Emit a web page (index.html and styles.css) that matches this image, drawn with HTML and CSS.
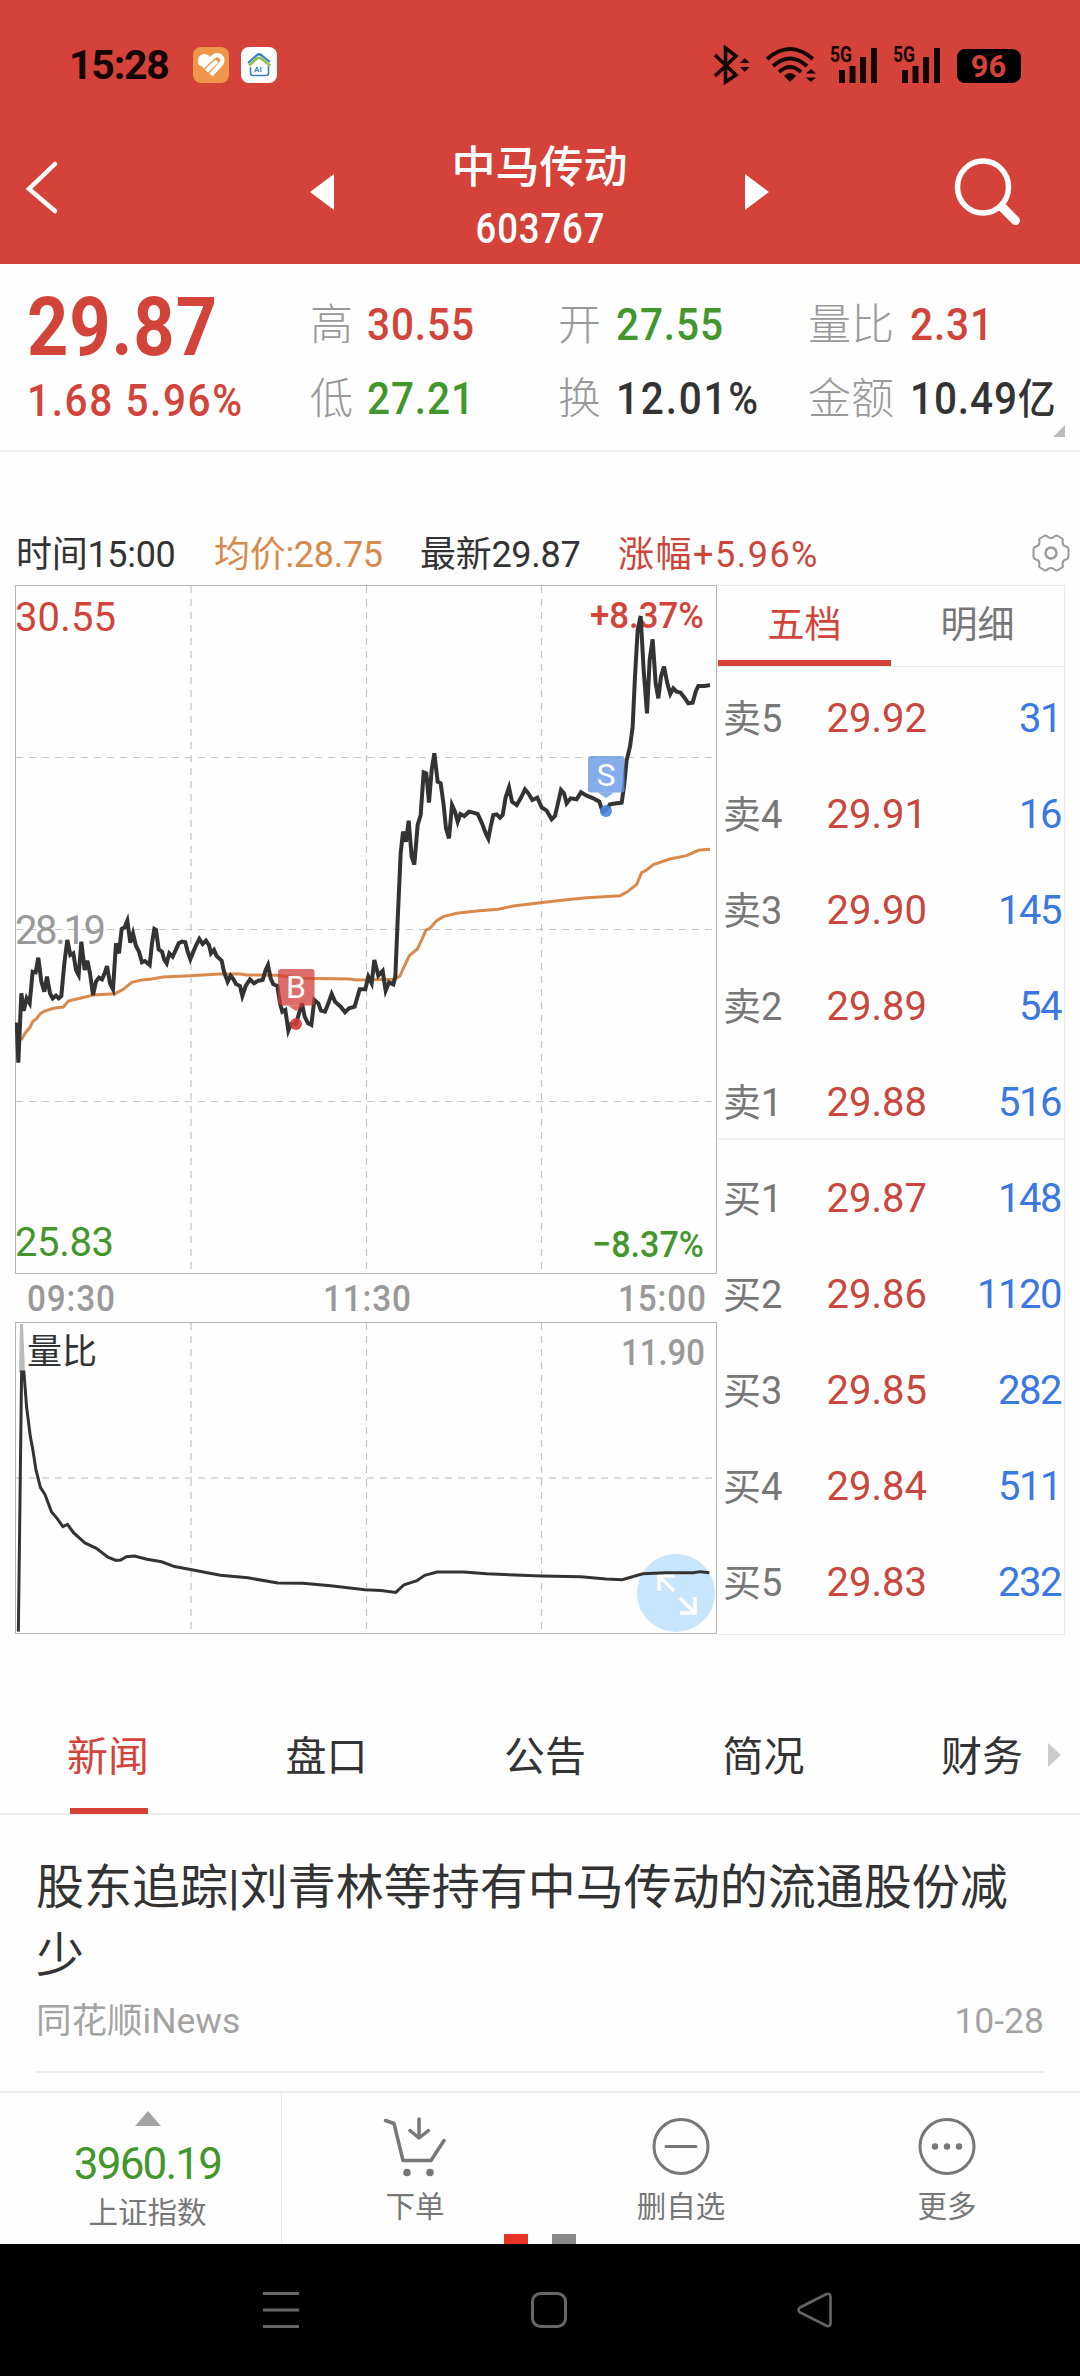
FILE: index.html
```html
<!DOCTYPE html>
<html lang="zh-CN">

<head>
    <meta charset="UTF-8">
    <meta name="viewport" content="width=device-width, initial-scale=1.0">
    <title>中马传动 603767</title>
    <link rel="stylesheet" href="styles.css">
</head>

<body>
    <header class="top">
        <div class="status">
            <span class="clock">15:28</span>
            <svg class="app-icon" width="36" height="36" viewBox="0 0 36 36">
                <rect width="36" height="36" rx="8" fill="#f0964a"/>
                <path d="M9.500 20L20 10C26 5 33 12 27 18L18 28M13.500 24L24 14" fill="none" stroke="#fff" stroke-width="4.400"/>
                <path d="M6 18C3 12 7 7 11 7Q15 7 17 10L8 19Z" fill="#fff"/>
            </svg>
            <svg class="app-icon" width="36" height="36" viewBox="0 0 36 36">
                <rect width="36" height="36" rx="8" fill="#fff"/>
                <path d="M7 16L16 8Q18 6.500 20 8L29 15" fill="none" stroke="#3d7fc4" stroke-width="2.200"/>
                <path d="M8 18.500L16 11.500Q18 10 20 11.500L29 18.500" fill="none" stroke="#8fbf4f" stroke-width="2.600"/>
                <path d="M9.500 20V26Q9.500 28.500 12 28.500H25Q27.500 28.500 27.500 26V19" fill="none" stroke="#3d7fc4" stroke-width="1.600"/>
                <text x="13" y="25" class="ai">AI</text>
            </svg>
            <span class="spacer"></span>
            <svg width="38" height="40" viewBox="711 45 38 40">
                <path d="M713 55L734 75L723.500 82V48L734 56L713 76" fill="none" stroke="#150404" stroke-width="3.600"/>
                <path d="M738 63L742.800 58L747.600 63ZM738 67L742.800 72L747.600 67Z" fill="#150404"/>
            </svg>
            <svg class="wifi" width="52" height="40" viewBox="763 45 52 40">
                <path d="M765 59Q788 39 811 59M771 66Q788 51 805 66M777 72Q788 62 799 72" fill="none" stroke="#150404" stroke-width="3.800"/>
                <path d="M782 76Q788 70 794 76L788 82Z" fill="#150404"/>
                <path d="M804 73.500L809 69L814 73.500ZM804 77.500L809 82L814 77.500Z" fill="#150404"/>
            </svg>
            <svg class="signal" width="50" height="46" viewBox="827 39 50 46">
                <text x="829" y="62" textLength="22" lengthAdjust="spacingAndGlyphs">5G</text>
                <path d="M841 70V83M851.500 66V83M862 57V83M873 48V83"/>
            </svg>
            <svg class="signal" width="50" height="46" viewBox="827 39 50 46">
                <text x="829" y="62" textLength="22" lengthAdjust="spacingAndGlyphs">5G</text>
                <path d="M841 70V83M851.500 66V83M862 57V83M873 48V83"/>
            </svg>
            <span class="battery">96</span>
        </div>
        <div class="title-bar">
            <svg class="back" width="36" height="56" viewBox="24 160 36 56">
                <path d="M55 164L29 189L55 211" fill="none" stroke="#fff" stroke-width="4.500" stroke-linecap="round"/>
            </svg>
            <svg class="prev" width="24" height="36" viewBox="0 0 24 36"><path d="M0 18L24 0V36Z" fill="#fff"/></svg>
            <div class="stock">
                <h1>中马传动</h1>
                <span class="code num">603767</span>
            </div>
            <svg class="next" width="24" height="36" viewBox="0 0 24 36"><path d="M24 18L0 0V36Z" fill="#fff"/></svg>
            <svg class="search" width="70" height="74" viewBox="950 155 70 74">
                <ellipse cx="982" cy="187" rx="25.500" ry="26" fill="none" stroke="#fff" stroke-width="5.500"/>
                <path d="M1001 207L1014.500 220.500" stroke="#fff" stroke-width="9" stroke-linecap="round"/>
            </svg>
        </div>
    </header>

    <section class="quote">
        <div class="price">
            <span class="last num">29.87</span>
            <span class="change num">1.68 5.96%</span>
        </div>
        <dl class="c1">
            <dt>高</dt><dd class="num red">30.55</dd>
            <dt>低</dt><dd class="num green">27.21</dd>
        </dl>
        <dl class="c2">
            <dt>开</dt><dd class="num green">27.55</dd>
            <dt>换</dt><dd class="num wide">12.01%</dd>
        </dl>
        <dl class="c3">
            <dt>量比</dt><dd class="num red">2.31</dd>
            <dt>金额</dt><dd class="num">10.49<small>亿</small></dd>
        </dl>
        <i class="corner"></i>
    </section>

    <section class="info">
        <span>时间15:00</span>
        <span class="avg">均价:28.75</span>
        <span>最新29.87</span>
        <span class="rise">涨幅+5.96%</span>
        <svg width="38" height="38" viewBox="-19 -19 38 38" fill="none" stroke="#999" stroke-width="2">
            <path d="M-6 -17.500Q-4 -17.500 -3 -16Q0 -14 3 -16Q4 -17.500 6 -17.500L11 -14.500Q12.500 -13.500 11.500 -11.500Q11.500 -7 15 -6.500Q17.500 -6 17.500 -3V3Q17.500 6 15 6.500Q11.500 7 11.500 11.500Q12.500 13.500 11 14.500L6 17.500Q4 17.500 3 16Q0 14 -3 16Q-4 17.500 -6 17.500L-11 14.500Q-12.500 13.500 -11.500 11.500Q-11.500 7 -15 6.500Q-17.500 6 -17.500 3V-3Q-17.500 -6 -15 -6.500Q-11.500 -7 -11.500 -11.500Q-12.500 -13.500 -11 -14.500Z"/>
            <circle r="5.500" stroke-width="2.500"/>
        </svg>
    </section>

    <main class="market">
        <div class="charts">
            <!-- intraday price -->
            <svg class="chart" width="703" height="690" viewBox="15 585 703 690">
                <g class="grid">
                    <path d="M16 757.500H717M16 929.500H717M16 1101.500H717"/>
                    <path d="M191 586V1273M366.500 586V1273M541.500 586V1273"/>
                </g>
                <rect class="frame" x="15.500" y="585.500" width="701" height="688"/>
                <text class="lbl red" x="15" y="631" textLength="101">30.55</text>
                <text class="lbl grey" x="15" y="944" textLength="91">28.19</text>
                <text class="lbl green" x="15" y="1256" textLength="99">25.83</text>
                <text class="pct red" x="590" y="628" textLength="114" lengthAdjust="spacingAndGlyphs">+8.37%</text>
                <text class="pct green" x="592" y="1257" textLength="112" lengthAdjust="spacingAndGlyphs">−8.37%</text>
                <g transform="translate(0 570) scale(.33333)" fill="none">
                    <polyline stroke="#d88a4c" stroke-width="9" points="64,1410 75,1390 90,1372 98,1355 110,1345 122,1330 135,1323 160,1315 190,1311 205,1293 240,1285 280,1275 345,1271 370,1258 395,1237 425,1230 455,1227 490,1221 570,1217 660,1212 720,1212 740,1215 830,1216 900,1225 1050,1227 1070,1230 1185,1228 1200,1218 1210,1195 1228,1157 1252,1137 1265,1110 1278,1080 1290,1075 1310,1052 1330,1040 1370,1030 1430,1023 1495,1018 1540,1008 1620,998 1700,989 1760,983 1860,977 1880,967 1910,943 1925,908 1940,900 1960,884 2010,867 2060,857 2095,841 2130,838"/>
                    <polyline stroke="#333" stroke-width="12" points="50,1357 55,1478 64,1270 71,1322 80,1285 89,1300 98,1205 107,1207 115,1163 124,1235 133,1265 141,1220 150,1270 158,1285 168,1277 176,1285 184,1278 193,1180 202,1110 211,1155 220,1150 228,1200 236,1215 244,1115 254,1200 262,1172 270,1210 279,1275 288,1235 297,1223 306,1228 314,1210 321,1188 330,1240 339,1258 348,1120 357,1150 365,1077 374,1072 382,1052 391,1118 399,1090 408,1128 417,1145 426,1177 435,1173 449,1185 456,1120 463,1077 468,1080 476,1138 486,1145 493,1170 500,1180 508,1150 518,1160 528,1138 536,1120 546,1115 556,1117 563,1145 571,1168 580,1145 590,1122 598,1107 608,1122 618,1112 627,1125 633,1150 642,1140 650,1158 665,1172 672,1205 683,1235 692,1217 700,1227 708,1242 720,1248 727,1278 737,1248 750,1228 762,1240 775,1232 788,1230 797,1200 804,1185 812,1225 820,1243 832,1248 840,1300 847,1325 856,1320 865,1382 873,1362 888,1362 897,1330 906,1300 914,1340 924,1360 934,1365 943,1290 955,1300 963,1322 975,1325 985,1300 995,1272 1005,1295 1022,1310 1035,1327 1047,1315 1064,1310 1079,1258 1096,1258 1105,1220 1115,1240 1123,1170 1135,1217 1148,1203 1157,1262 1167,1237 1180,1243 1186,1220 1193,1050 1202,850 1209,785 1218,815 1226,752 1235,860 1243,884 1253,765 1262,735 1271,607 1279,610 1287,698 1295,600 1303,550 1313,635 1322,640 1331,705 1338,775 1347,805 1356,705 1365,725 1373,755 1381,732 1393,738 1407,725 1420,728 1433,732 1446,760 1458,792 1465,806 1472,770 1480,735 1490,733 1500,743 1508,735 1517,682 1527,652 1536,695 1550,705 1562,685 1575,658 1585,670 1597,690 1612,683 1625,712 1640,722 1655,748 1665,738 1675,695 1683,660 1692,670 1700,700 1712,685 1730,688 1743,667 1760,677 1780,685 1798,695 1808,725 1818,720 1830,703 1850,700 1865,698 1872,650 1880,570 1890,530 1898,470 1905,320 1913,180 1922,138 1931,300 1941,430 1949,270 1958,208 1967,340 1975,385 1983,320 1992,290 2002,340 2011,372 2020,355 2030,365 2042,368 2055,385 2065,400 2078,398 2087,365 2095,348 2115,348 2130,345"/>
                </g>
                <g fill="#d23c38" fill-opacity=".75">
                    <rect x="278" y="969" width="36.500" height="36.500" rx="3"/>
                    <path d="M288 1005.500H304L296 1011Z"/>
                    <circle cx="296" cy="1024" r="6" fill-opacity=".9"/>
                </g>
                <text class="mark" x="296" y="998">B</text>
                <g fill="#6396e6" fill-opacity=".78">
                    <rect x="588" y="756" width="36.500" height="36.500" rx="3"/>
                    <path d="M598 792.500H614L606 798Z"/>
                    <circle cx="606" cy="811" r="6" fill="#4a84dd" fill-opacity=".9"/>
                </g>
                <text class="mark" x="606" y="785.500">S</text>
            </svg>
            <div class="times">
                <span class="num">09:30</span>
                <span class="num">11:30</span>
                <span class="num">15:00</span>
            </div>
            <!-- volume ratio -->
            <svg class="chart" width="703" height="313" viewBox="15 1322 703 313">
                <g class="grid">
                    <path d="M16 1478H717" stroke-width="2" stroke="#ddd"/>
                    <path d="M191 1323V1633M366.500 1323V1633M541.500 1323V1633"/>
                </g>
                <rect class="frame" x="15.500" y="1322.500" width="701" height="311"/>
                <text class="ratio" x="27" y="1364">量比</text>
                <text class="pct grey" x="621" y="1365" textLength="84" lengthAdjust="spacingAndGlyphs">11.90</text>
                <circle cx="676" cy="1593" r="39" fill="#c7e5fd"/>
                <path d="M674 1591L659 1576M659 1591V1576H675M680 1598L695 1613M680 1613H695V1597" fill="none" stroke="#fff" stroke-width="3.500"/>
                <path d="M19 1372L20 1324H23L25 1372Z" fill="#bbb"/>
                <g transform="translate(0 1080) scale(.45914 .36364)" fill="none" stroke="#333">
                    <polyline class="thin" points="40,1517 47,803 52,803 58,900 66,980 72,1020 78,1070 88,1120 98,1140 112,1187 125,1207 137,1228 147,1222 160,1245 185,1273 210,1288 235,1312 253,1321 263,1320 275,1311 293,1309 320,1318 352,1325 380,1338 415,1346 480,1362 540,1369 605,1383 660,1384 720,1391 795,1402 830,1404 862,1409 880,1388 908,1377 925,1362 952,1353 1010,1353 1060,1358 1180,1364 1265,1366 1320,1372 1355,1374 1400,1358 1450,1355 1510,1355 1525,1352 1545,1355"/>
                </g>
            </svg>
        </div>

        <aside class="book">
            <div class="book-tabs">
                <span class="active">五档</span>
                <span>明细</span>
            </div>
            <div class="sell">
                <div class="row"><span>卖5</span><b>29.92</b><em>31</em></div>
                <div class="row"><span>卖4</span><b>29.91</b><em>16</em></div>
                <div class="row"><span>卖3</span><b>29.90</b><em>145</em></div>
                <div class="row"><span>卖2</span><b>29.89</b><em>54</em></div>
                <div class="row"><span>卖1</span><b>29.88</b><em>516</em></div>
            </div>
            <div class="buy">
                <div class="row"><span>买1</span><b>29.87</b><em>148</em></div>
                <div class="row"><span>买2</span><b>29.86</b><em>1120</em></div>
                <div class="row"><span>买3</span><b>29.85</b><em>282</em></div>
                <div class="row"><span>买4</span><b>29.84</b><em>511</em></div>
                <div class="row"><span>买5</span><b>29.83</b><em>232</em></div>
            </div>
        </aside>
    </main>

    <nav class="tabs">
        <a class="active">新闻</a>
        <a>盘口</a>
        <a>公告</a>
        <a>简况</a>
        <a>财务</a>
        <svg width="13" height="24" viewBox="0 0 13 24"><path d="M0 0L13 12L0 24Z" fill="#ccc"/></svg>
    </nav>

    <article class="news">
        <h2>股东追踪|刘青林等持有中马传动的流通股份减少</h2>
        <p><span>同花顺iNews</span><span>10-28</span></p>
    </article>

    <footer class="toolbar">
        <div class="index">
            <svg width="26" height="15" viewBox="0 0 26 15"><path d="M0 15L13 0L26 15Z" fill="#a3a3a3"/></svg>
            <strong>3960.19</strong>
            <span>上证指数</span>
        </div>
        <div class="tool">
            <svg width="64" height="60" viewBox="383 2117 64 60" fill="none" stroke="#777" stroke-width="3.500" stroke-linecap="round" stroke-linejoin="round">
                <path d="M385.500 2120.500L394 2123.500L403 2160.500H431L444 2140.500M419 2119V2138M410 2130.500L419 2138L428.500 2130.500"/>
                <g fill="#777" stroke="none"><circle cx="407" cy="2172.500" r="3.800"/><circle cx="430" cy="2172.500" r="3.800"/></g>
            </svg>
            <span>下单</span>
        </div>
        <div class="tool">
            <svg width="60" height="60" viewBox="0 0 60 60" fill="none" stroke="#777" stroke-width="3" stroke-linecap="round">
                <circle cx="30" cy="29.500" r="27"/>
                <path d="M15 29.500H45"/>
            </svg>
            <span>删自选</span>
        </div>
        <div class="tool">
            <svg width="60" height="60" viewBox="0 0 60 60" fill="none" stroke="#777" stroke-width="3">
                <circle cx="30" cy="29.500" r="27"/>
                <g fill="#777" stroke="none"><circle cx="18" cy="29.500" r="3.200"/><circle cx="30" cy="29.500" r="3.200"/><circle cx="42" cy="29.500" r="3.200"/></g>
            </svg>
            <span>更多</span>
        </div>
        <div class="pager"><i></i><i></i></div>
    </footer>

    <div class="sysnav">
        <svg width="1080" height="132" viewBox="0 2244 1080 132" fill="none" stroke="#666" stroke-width="3">
            <path d="M263 2293.500H299M263 2310H299M263 2326.500H299"/>
            <rect x="532.500" y="2293.500" width="33" height="33" rx="8"/>
            <path d="M800 2307.500L826 2294.300Q830.500 2292.500 830.500 2297V2323Q830.500 2327.500 826 2325.500L800 2312.500Q797 2310 800 2307.500Z" stroke-width="2.600"/>
        </svg>
    </div>
</body>

</html>
```

FILE: styles.css
```css
* {
    box-sizing: border-box;
}

body {
    margin: 0;
    width: 1080px;
    background-color: #fefefe;
    color: #333;
    font-family: Roboto, "Noto Sans CJK SC", sans-serif;
}

svg {
    display: block;
    flex: none;
}

h1, h2, p, dl, dd {
    margin: 0;
    font-weight: 400;
}

.num {
    display: inline-block;
    font-weight: 500;
    transform: scaleX(.9);
    transform-origin: left center;
    letter-spacing: 1px;
    white-space: nowrap;
}

.red { color: #d24439; fill: #d24439; }
.green { color: #43962c; fill: #43962c; }
.grey { fill: #999; }

/* header */
.top {
    height: 264px;
    background-color: #d44239;
    color: white;
}

.status {
    display: flex;
    align-items: center;
    height: 130px;
    padding: 0 58px 0 69px;
}

.clock {
    width: 124px;
    color: #150404;
    font-size: 41px;
    font-weight: 700;
    letter-spacing: -1.2px;
}

.app-icon {
    margin-right: 12px;
}

.ai {
    font-size: 8px;
    font-weight: 700;
    fill: #3d7fc4;
}

.spacer {
    flex: 1;
}

.wifi {
    margin: 0 11px 0 14px;
}

.signal {
    margin: -6px 13px 0 0;
}

.signal text {
    font-size: 22px;
    font-weight: 700;
    fill: #150404;
}

.signal path {
    stroke: #150404;
    stroke-width: 6;
}

.battery {
    width: 63px;
    height: 34px;
    margin: 2px 2px 0 3px;
    border-radius: 8px;
    background-color: black;
    box-shadow: 2px 0 0 -1px black;
    color: #d44239;
    font-size: 31px;
    font-weight: 700;
    line-height: 35px;
    text-align: center;
}

.title-bar {
    display: flex;
    align-items: flex-start;
    height: 134px;
    padding-left: 24px;
}

.back { margin-top: 30px; }
.prev { margin: 44px 0 0 250px; }
.next { margin-top: 44px; }
.search { margin: 25px 0 0 182px; }

.stock {
    width: 411px;
    padding-top: 5px;
    text-align: center;
}

.stock h1 {
    font-size: 44px;
    font-weight: 500;
    line-height: 66px;
}

.code {
    transform: scaleX(.87);
    transform-origin: center;
    padding-left: 3px;
    font-size: 42px;
    line-height: 56px;
}

/* quote */
.quote {
    position: relative;
    display: grid;
    grid-template-columns: 310px 248px 250px 272px;
    height: 188px;
    border-bottom: 2px solid #f2f2f2;
}

.price {
    padding: 18px 0 0 27px;
    color: #d24439;
}

.price .num {
    display: block;
}

.price .last {
    transform: scaleX(.88);
    font-size: 82px;
    font-weight: 700;
    line-height: 90px;
}

.change {
    font-size: 45px;
    letter-spacing: 1.8px;
    line-height: 58px;
}

.quote dl {
    display: grid;
    grid-template-columns: 57px 1fr;
    grid-auto-rows: 74px;
    align-content: start;
    padding-top: 24px;
    line-height: 74px;
}

.quote .c2 {
    grid-template-columns: 58px 1fr;
}

.quote .c3 {
    grid-template-columns: 102px 1fr;
}

.quote dt {
    color: #999;
    font-size: 43px;
    font-weight: 300;
}

.quote dd {
    font-size: 45px;
}

.quote .wide {
    letter-spacing: 2px;
}

.quote small {
    font-size: 42px;
    letter-spacing: 0;
}

.corner {
    position: absolute;
    right: 15px;
    bottom: 13px;
    border-left: 12px solid transparent;
    border-bottom: 12px solid #bbb;
}

/* line above the chart */
.info {
    display: grid;
    grid-template-columns: 198px 206px 198px 414px 38px;
    align-items: center;
    height: 61px;
    margin: 68px 0 4px;
    padding-left: 16px;
    font-size: 36px;
    letter-spacing: -.3px;
    white-space: nowrap;
}

.info .avg { color: #d88a4c; }

.info .rise {
    color: #cc453c;
    letter-spacing: 1.5px;
}

.info svg {
    margin-top: 5px;
}

/* charts */
.market {
    display: flex;
    height: 1050px;
    padding-left: 15px;
}

.charts {
    width: 703px;
}

.grid {
    fill: none;
    stroke: #c4c4c4;
    stroke-width: 1.2;
    stroke-dasharray: 7 6;
}

.frame {
    fill: none;
    stroke: #b5b5b5;
}

.chart .lbl {
    font-size: 40px;
}

.chart .pct {
    font-size: 37px;
    font-weight: 500;
}

.chart .ratio {
    font-size: 35px;
    fill: #333;
}

.chart .mark {
    font-size: 32px;
    fill: white;
    text-anchor: middle;
}

.thin {
    stroke-width: 3;
    vector-effect: non-scaling-stroke;
}

.times {
    display: flex;
    justify-content: space-between;
    height: 47px;
    padding: 0 11px 0 12px;
    color: #999;
    font-size: 37px;
    line-height: 47px;
}

.times .num {
    transform-origin: center;
    margin: 0 -5px;
}

/* order book */
.book {
    width: 347px;
    border: 1px solid #e8e8e8;
    border-left: none;
}

.book-tabs {
    display: flex;
    height: 81px;
    border-bottom: 1px solid #e8e8e8;
    color: #777;
    font-size: 37px;
    line-height: 80px;
    text-align: center;
}

.book-tabs span {
    width: 173px;
}

.book-tabs .active {
    height: 80px;
    border-bottom: 6px solid #d44239;
    color: #d24439;
}

.sell {
    height: 473px;
    padding-top: 4px;
    border-bottom: 2px solid #f3f3f3;
}

.buy {
    padding-top: 11px;
}

.row {
    display: grid;
    grid-template-columns: 80px 124px 1fr;
    height: 96px;
    padding: 0 3px 0 5px;
    font-size: 40px;
    line-height: 96px;
}

.row span {
    color: #777;
    font-size: 38px;
}

.row b,
.row em {
    font-weight: 400;
    font-style: normal;
    text-align: right;
}

.row b { color: #c9463e; }

.row em {
    color: #3b78e0;
    letter-spacing: -1.5px;
}

/* tabs */
.tabs {
    display: flex;
    height: 180px;
    padding: 64px 0 0 67px;
    border-bottom: 2px solid #ececec;
    font-size: 41px;
    line-height: 116px;
}

.tabs a {
    width: 218.500px;
    height: 115px;
}

.tabs a:nth-child(5) {
    width: 107px;
}

.tabs .active {
    color: #d24439;
    background: linear-gradient(#d44239, #d44239) 3px bottom / 78px 6px no-repeat;
}

.tabs svg {
    margin-top: 44px;
}

/* news */
.news {
    height: 258px;
    margin: 0 36px;
    padding-top: 39px;
    border-bottom: 2px solid #ececec;
}

.news h2 {
    font-size: 48px;
    line-height: 68px;
}

.news p {
    display: flex;
    justify-content: space-between;
    color: #a3a3a3;
    font-size: 35.500px;
    line-height: 62px;
}

/* bottom toolbar */
.toolbar {
    position: relative;
    display: flex;
    height: 153px;
    margin-top: 18px;
    border-top: 2px solid #ececec;
    color: #777;
    font-size: 29.500px;
}

.index {
    display: flex;
    flex-direction: column;
    align-items: center;
    width: 282px;
    padding: 18px 0 0 14px;
    border-right: 1px solid #e8e8e8;
    line-height: 34px;
}

.index strong {
    margin-top: 13px;
    color: #43962c;
    font-size: 44px;
    font-weight: 400;
    letter-spacing: -1.8px;
    line-height: 50px;
}

.index span {
    margin-top: 7px;
}

.tool {
    display: flex;
    flex-direction: column;
    align-items: center;
    width: 266px;
    padding-top: 24px;
    line-height: 60px;
}

.pager {
    position: absolute;
    left: 504px;
    bottom: 0;
    display: flex;
    gap: 24px;
}

.pager i {
    width: 24px;
    height: 10px;
    background-color: #888;
}

.pager i:first-child {
    background-color: #e83323;
}

.sysnav {
    height: 132px;
    background-color: black;
}
```
